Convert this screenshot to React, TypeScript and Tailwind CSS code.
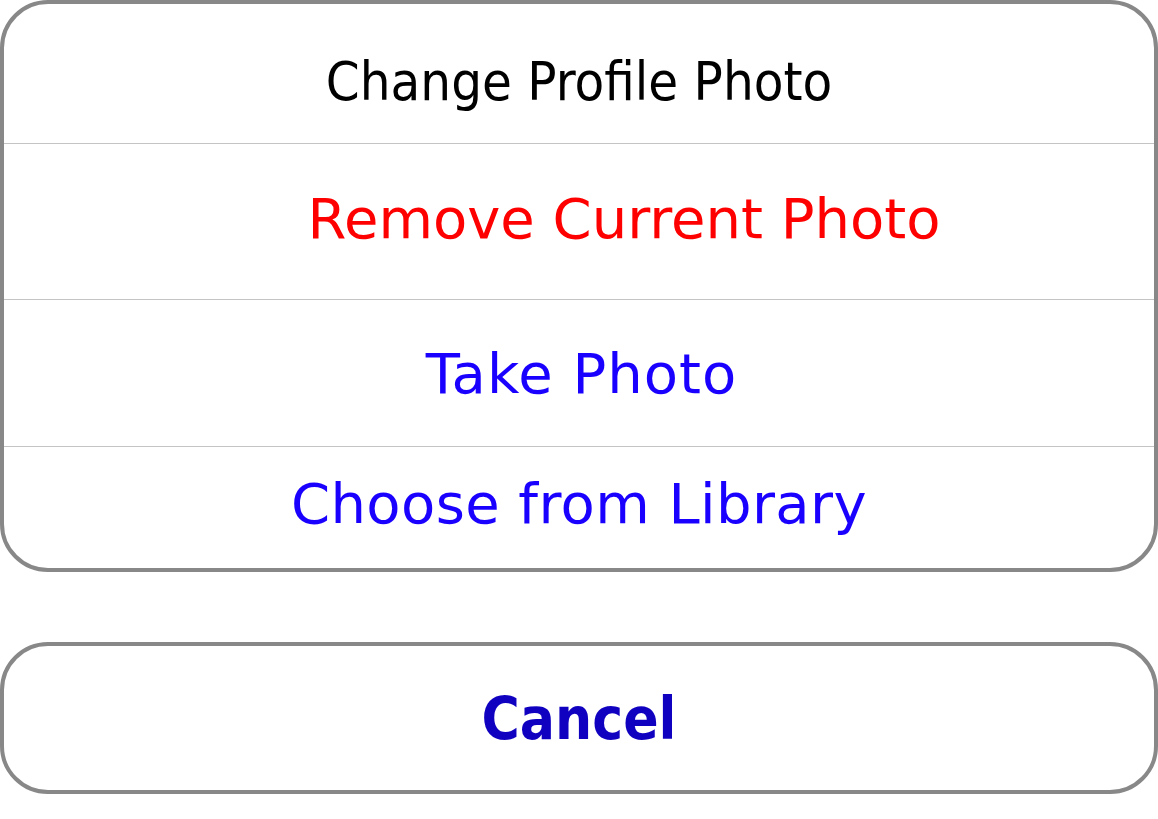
export default function App() {
  const title = { fontFamily: '"DejaVu Sans", sans-serif', fontStretch: "condensed" } as const;
  const body = { fontFamily: '"DejaVu Sans", sans-serif' } as const;

  return (
    <div className="w-[1158px] h-[819px] bg-white" style={body}>
      {/* action sheet */}
      <div className="flex flex-col rounded-[48px] border-4 border-[#888888] overflow-hidden">
        <div className="h-[140px] pt-[16px] flex items-center justify-center border-b border-[#c4c4c4]">
          <span className="text-[54px] leading-none text-black" style={title}>Change Profile Photo</span>
        </div>
        <div className="h-[156px] pb-[6px] pl-[90px] flex items-center justify-center border-b border-[#c4c4c4]">
          <span className="text-[56px] leading-none text-[#ff0000]">Remove Current Photo</span>
        </div>
        <div className="h-[147px] pt-[2px] pl-[5px] flex items-center justify-center border-b border-[#c4c4c4]">
          <span className="text-[56px] leading-none tracking-[1px] text-[#1a00ff]">Take Photo</span>
        </div>
        <div className="h-[121px] pb-[8px] flex items-center justify-center">
          <span className="text-[56px] leading-none tracking-[0.4px] text-[#1a00ff]">Choose from Library</span>
        </div>
      </div>

      {/* cancel */}
      <div className="mt-[70px] h-[152px] pt-[2px] flex items-center justify-center rounded-[48px] border-4 border-[#888888]">
        <span className="text-[58px] leading-none font-bold text-[#1000c0]" style={title}>Cancel</span>
      </div>
    </div>
  );
}
